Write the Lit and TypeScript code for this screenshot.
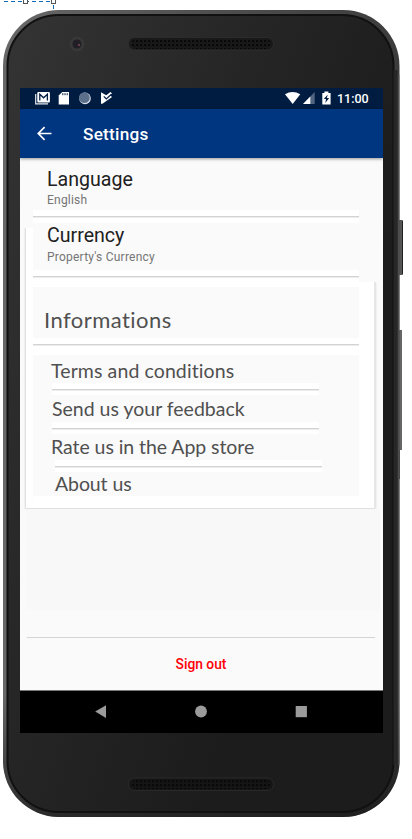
import { LitElement, html, css } from "lit";
import { customElement } from "lit/decorators.js";

@customElement("phone-status")
class PhoneStatus extends LitElement {
  static styles = css`
    :host { display: flex; align-items: center; height: 21px; background: #001c41; color: #fff; font: 500 12.5px/21px Roboto, sans-serif; }
    svg { display: block; }
    .spacer { flex: 1; }
    .time { width: 46px; }
  `;
  render() {
    return html`
      <svg width="110" height="21" viewBox="0 0 110 21">
        <path d="M15.7 6v9.8H28" fill="none" stroke="#e4e9ef" stroke-width="1.2" />
        <rect x="17.3" y="4" width="12.6" height="10.4" rx="1" fill="#fff" />
        <path d="M19.8 12.6V6.2l3.8 3.6 3.8-3.6v6.4" fill="none" stroke="#001c41" stroke-width="1.3" />
        <path d="M42.2 4H49v12.5H38.7V7.6z" fill="#fff" />
        <path d="M42.8 5.2v2M45 5.2v2M47.2 5.2v2" stroke="#001c41" stroke-width="1" />
        <circle cx="65" cy="10.4" r="5.8" fill="#dce2ea" />
        <circle cx="64.4" cy="9.7" r="5.4" fill="#5c6f8b" />
        <path d="M81 4.2l5.2 3L90.5 4l1.6 1.6-2 2 2 1.4-9.7 6.8H81z" fill="#fff" />
        <path d="M83.8 8.4l2.5 2.6 5.4-5" fill="none" stroke="#001c41" stroke-width="1.2" />
      </svg>
      <div class="spacer"></div>
      <svg width="53" height="21" viewBox="0 0 53 21">
        <path d="M1 6.2Q8.5 1.8 16.3 6.2L8.7 16z" fill="#fff" />
        <path d="M30.7 4v12H19z" fill="#536681" />
        <path d="M26.3 8.5V16H19z" fill="#fff" />
        <path d="M38.3 5.1h2.1V3.6h4v1.5h2.2v11.4h-8.3z" fill="#fff" />
        <path d="M43.8 6.5l-4 4.4h2.3l-.9 4 4-4.8h-2.4z" fill="#001c41" />
      </svg>
      <div class="time">11:00</div>
    `;
  }
}

@customElement("settings-panel")
class SettingsPanel extends LitElement {
  static styles = css`
    :host { display: grid; grid-template-columns: 13px 326px 24px; height: 351px; flex: none; }
    .side { display: flex; flex-direction: column; }
    .gap-left { height: 70px; }
    .gap-right { height: 124px; }
    .edge { flex: 1; background: #fff; box-sizing: border-box; }
    .edge.left { margin-left: 5px; border-left: 1px solid #e0e0e0; border-bottom: 1px solid #e0e0e0; border-bottom-left-radius: 2px; box-shadow: -1px 1px 1px #f0f0f0; }
    .edge.right { margin-right: 7px; border-right: 2px solid #e6e6e6; border-bottom: 1px solid #e0e0e0; border-bottom-right-radius: 2px; box-shadow: 1px 1px 1px #f0f0f0; }
    .main { display: flex; flex-direction: column; font-family: Roboto, sans-serif; }
    .row { box-sizing: border-box; padding-left: 14px; }
    .language { height: 52px; padding-top: 10px; }
    .currency { height: 47px; padding-top: 1px; }
    .title { font-size: 19.6px; line-height: 24px; color: #212121; }
    .value { font-size: 12px; line-height: 14px; color: #757575; margin-top: 1px; letter-spacing: 0.22px; }
    .currency .value { margin-top: 2px; }
    .rule { background: #fff; display: flex; box-sizing: border-box; padding-top: 6px; }
    .rule::before { content: ""; flex: 1; height: 1px; background: #d3d3d3; border-bottom: 1px solid #ececec; }
    .r13 { height: 13px; }
    .r17 { height: 17px; }
    .heading { height: 51px; box-sizing: border-box; padding: 18px 0 0 11px; font: 22px/30px Lato, sans-serif; letter-spacing: 0.45px; color: #505050; }
    .links { display: flex; flex-direction: column; height: 141px; font: 19.5px/31px Lato, sans-serif; color: #505050; white-space: nowrap; font-variant-ligatures: none; }
    .link { flex: none; padding-left: 18px; }
    .l1 { height: 28px; letter-spacing: 0.1px; }
    .l2 { height: 27px; padding-left: 19px; line-height: 28px; }
    .l3 { height: 26px; line-height: 26px; letter-spacing: -0.06px; }
    .l4 { height: 24px; padding-left: 22px; line-height: 24px; letter-spacing: -0.1px; }
    .inset { height: 12px; width: 267px; margin-left: 19px; flex: none; }
    .inset.last { margin-left: 22px; }
    .foot { flex: 1; background: #fff; border-bottom: 1px solid #e0e0e0; box-shadow: 0 1px 1px #f0f0f0; }
  `;
  render() {
    return html`
      <div class="side"><div class="gap-left"></div><div class="edge left"></div></div>
      <div class="main">
        <div class="row language"><div class="title">Language</div><div class="value">English</div></div>
        <div class="rule r13"></div>
        <div class="row currency"><div class="title">Currency</div><div class="value">Property's Currency</div></div>
        <div class="rule r17"></div>
        <div class="heading">Informations</div>
        <div class="rule r17"></div>
        <div class="links">
          <div class="link l1">Terms and conditions</div>
          <div class="rule inset"></div>
          <div class="link l2">Send us your feedback</div>
          <div class="rule inset"></div>
          <div class="link l3">Rate us in the App store</div>
          <div class="rule inset last"></div>
          <div class="link l4">About us</div>
        </div>
        <div class="foot"></div>
      </div>
      <div class="side"><div class="gap-right"></div><div class="edge right"></div></div>
    `;
  }
}

@customElement("app-root")
class AppRoot extends LitElement {
  static styles = css`
    :host { display: block; position: relative; width: 412px; height: 839px; overflow: hidden; background: #fff; }
    .device { position: absolute; inset: 0; }
    .screen { position: relative; width: 363px; height: 645px; margin: 88px 0 0 20px; display: flex; flex-direction: column; background: #fafafa; overflow: hidden; }
    :host::before { content: ""; display: table; }
    .bar { flex: none; height: 49px; background: #003580; color: #fff; display: flex; align-items: center; font: 500 17.2px/49px Roboto, sans-serif; letter-spacing: 0.25px; z-index: 1; box-shadow: 0 1px 3px rgba(0, 0, 0, 0.4); }
    .bar svg { width: 63px; height: 49px; }
    .bar span { padding-top: 2px; }
    .blank { height: 101px; flex: none; margin: 0 3px 0 6px; background: #f8f8f8; }
    .signout { flex: 1; margin: 27px 8px 0 7px; border-top: 1px solid #d4d4d4; box-sizing: border-box; text-align: center; color: #ff0008; font: 500 13.8px/52px Roboto, sans-serif; }
    .nav { height: 43px; flex: none; background: #000; border-top: 1px solid #777; box-sizing: border-box; }
    .nav svg { display: block; }
  `;
  render() {
    return html`
      <svg class="device" width="412" height="839" viewBox="0 0 412 839">
        <defs>
          <linearGradient id="body" x1="0" y1="0" x2="1" y2="0.7">
            <stop offset="0" stop-color="#343434" />
            <stop offset="0.45" stop-color="#252525" />
            <stop offset="0.8" stop-color="#1c1c1c" />
          </linearGradient>
          <linearGradient id="rim" x1="0" y1="0" x2="1" y2="0">
            <stop offset="0" stop-color="#686868" />
            <stop offset="0.5" stop-color="#505050" />
            <stop offset="1" stop-color="#3c3c3c" />
          </linearGradient>
          <linearGradient id="fade" x1="0" y1="0" x2="0" y2="1">
            <stop offset="0.85" stop-color="#111" stop-opacity="0" />
            <stop offset="1" stop-color="#111" stop-opacity="0.7" />
          </linearGradient>
          <pattern id="dots" width="4" height="4" patternUnits="userSpaceOnUse">
            <rect x="0" y="0" width="2" height="2" fill="#080808" />
            <rect x="2" y="2" width="1" height="1" fill="#0c0c0c" />
          </pattern>
        </defs>
        <path d="M4 1.5H54M53.5 5V10" stroke="#0e6bb8" stroke-width="1" stroke-dasharray="4 3" fill="none" />
        <rect x="23.5" y="-1.5" width="4" height="5" fill="#fff" stroke="#555" />
        <rect x="51.5" y="-1.5" width="4" height="5" fill="#fff" stroke="#555" />
        <rect x="398" y="220" width="5" height="55" rx="1" fill="#555" />
        <rect x="402" y="221" width="1" height="53" fill="#222" />
        <rect x="398" y="330" width="4" height="120" fill="#666" />
        <rect x="398" y="450" width="2" height="29" fill="#444" />
        <rect x="3" y="10" width="396.5" height="807" rx="56" fill="url(#rim)" />
        <rect x="3" y="10" width="396.5" height="807" rx="56" fill="url(#fade)" />
        <rect x="7.5" y="15" width="386" height="797" rx="51" fill="url(#body)" stroke="#111" stroke-width="2" />
        <path d="M395.5 70V765" stroke="#272727" stroke-width="4" />
        <path d="M398.9 75V765" stroke="#58585a" />
        <circle cx="77" cy="44" r="7.5" fill="#383838" />
        <circle cx="77" cy="44" r="4.6" fill="#211e25" />
        <circle cx="79" cy="45" r="1.2" fill="#68404f" />
        <rect x="128.5" y="37.5" width="145" height="12.5" rx="6" fill="#191919" stroke="#303030" stroke-width="0.7" />
        <rect x="132" y="39" width="138" height="10" rx="4" fill="url(#dots)" />
        <rect x="128.5" y="778" width="145" height="12.5" rx="6" fill="#151515" stroke="#303030" stroke-width="0.7" />
        <rect x="132" y="780" width="138" height="9" rx="4" fill="url(#dots)" />
      </svg>
      <div class="screen">
        <phone-status></phone-status>
        <div class="bar">
          <svg viewBox="0 0 63 49"><path d="M31.5 24.5H18.5M24.6 18.2l-6.3 6.3 6.3 6.3" fill="none" stroke="#fff" stroke-width="1.7" /></svg>
          <span>Settings</span>
        </div>
        <settings-panel></settings-panel>
        <div class="blank"></div>
        <div class="signout">Sign out</div>
        <div class="nav">
          <svg width="363" height="42" viewBox="0 0 363 42" fill="#9b9b9b">
            <path d="M75.2 20.5L86 14.3v12.6z" />
            <circle cx="181" cy="20.5" r="5.9" />
            <rect x="275.7" y="15" width="11.2" height="11.2" />
          </svg>
        </div>
      </div>
    `;
  }
}
